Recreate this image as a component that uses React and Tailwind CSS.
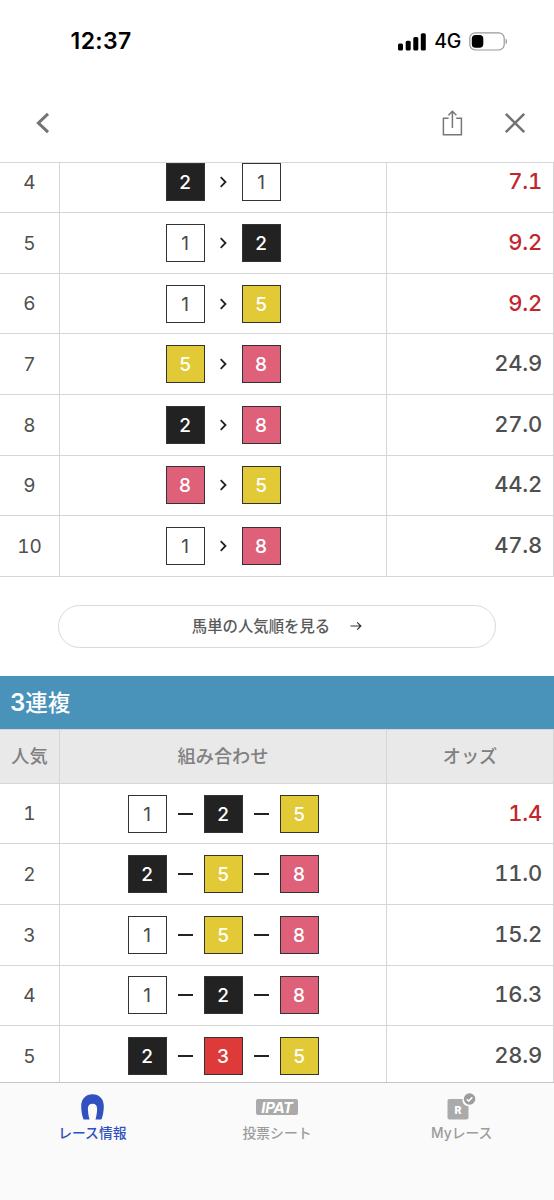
import React from 'react';

const exactaRows = [
  { rank: 4, horses: [2, 1], odds: '7.1' },
  { rank: 5, horses: [1, 2], odds: '9.2' },
  { rank: 6, horses: [1, 5], odds: '9.2' },
  { rank: 7, horses: [5, 8], odds: '24.9' },
  { rank: 8, horses: [2, 8], odds: '27.0' },
  { rank: 9, horses: [8, 5], odds: '44.2' },
  { rank: 10, horses: [1, 8], odds: '47.8' },
];

const trioRows = [
  { rank: 1, horses: [1, 2, 5], odds: '1.4' },
  { rank: 2, horses: [2, 5, 8], odds: '11.0' },
  { rank: 3, horses: [1, 5, 8], odds: '15.2' },
  { rank: 4, horses: [1, 2, 8], odds: '16.3' },
  { rank: 5, horses: [2, 3, 5], odds: '28.9' },
];

// bracket colours
const horseColors = {
  1: 'bg-white text-[#4a4a4a]',
  2: 'bg-[#222222] text-white font-medium',
  3: 'bg-[#df3a3a] text-white font-medium',
  5: 'bg-[#e2c936] text-white font-medium',
  8: 'bg-[#de6079] text-white font-medium',
};

const Horse = ({ number }) => (
  <span className={`flex h-[38px] w-[39px] items-center justify-center border border-[#333] pt-px text-[19px] leading-none ${horseColors[number]}`}>
    {number}
  </span>
);

const Separator = ({ ordered }) => (
  <span className="flex w-[37px] justify-center">
    {ordered ? (
      <svg width="8" height="12" viewBox="0 0 8 12" fill="none" stroke="#222" strokeWidth="1.8">
        <path d="M1.700 1.200 6.500 6l-4.800 4.800" />
      </svg>
    ) : (
      <span className="h-[2px] w-[15px] bg-[#222]"></span>
    )}
  </span>
);

const OddsRow = ({ row, ordered }) => (
  <div className="flex h-[60.6px] shrink-0 border-b border-[#d6d6d6] text-[#4f4f4f]">
    <div className="flex w-[60px] items-center justify-center border-r border-[#d6d6d6] pt-[2px] text-[19px] tabular-nums [font-kerning:none]">
      {row.rank}
    </div>
    <div className="flex w-[327px] items-center justify-center border-r border-[#d6d6d6]">
      {row.horses.map((number, i) => (
        <React.Fragment key={number}>
          {i > 0 && <Separator ordered={ordered} />}
          <Horse number={number} />
        </React.Fragment>
      ))}
    </div>
    <div className={`flex flex-1 items-center justify-end border-r border-[#d6d6d6] pr-[11px] pb-px text-[22px] font-medium tracking-[-0.2px] tabular-nums [font-kerning:none] ${parseFloat(row.odds) < 10 ? 'text-[#c1272d]' : ''}`}>
      {row.odds}
    </div>
  </div>
);

const StatusBar = () => (
  <div className="flex h-[83px] items-center justify-between pr-[46px] pl-[70.5px] text-black">
    <span className="text-[23px] font-semibold tracking-[0.4px]">12:37</span>
    <div className="flex items-center">
      <svg width="28" height="18" viewBox="0 0 28 18" fill="#000">
        <rect x="0" y="10.5" width="5" height="7" rx="1.5" />
        <rect x="7.7" y="7.8" width="5" height="9.7" rx="1.5" />
        <rect x="15.3" y="4" width="5" height="13.5" rx="1.5" />
        <rect x="22.8" y="0.3" width="5" height="17.2" rx="1.5" />
      </svg>
      <span className="ml-[8px] text-[19.5px] leading-none font-medium tracking-[-0.3px]">4G</span>
      <svg className="ml-[8px]" width="39" height="19" viewBox="0 0 39 19">
        <rect x="0.8" y="0.8" width="34.4" height="17.2" rx="5.5" fill="none" stroke="#999" strokeWidth="1.2" />
        <rect x="2.8" y="3" width="11.5" height="12.8" rx="3.8" fill="#000" />
        <path d="M36.6 6.6c1.9.9 1.9 4.9 0 5.8z" fill="#999" />
      </svg>
    </div>
  </div>
);

const Toolbar = () => (
  <div className="flex h-[79px] items-center justify-between pr-[28.5px] pl-[36px]">
    <svg width="14" height="22" viewBox="0 0 14 22" fill="none" stroke="#737373" strokeWidth="3">
      <path d="M12 1.8 2.4 11 12 20.2" />
    </svg>
    <div className="flex items-center gap-[40.5px]">
      <svg width="21" height="26" viewBox="0 0 21 26" fill="none" stroke="#777" strokeWidth="1.5">
        <path d="M6.6 8.2H1.4v16.6h18V8.2h-5.2" />
        <path d="M10.4 18V1.4M6.4 5.2l4-4 4 4" />
      </svg>
      <svg width="22" height="22" viewBox="0 0 22 22" fill="none" stroke="#737373" strokeWidth="2.6">
        <path d="m1.800 1.800 18.400 18.400M20.200 1.800 1.800 20.200" />
      </svg>
    </div>
  </div>
);

const Tab = ({ label, active, children }) => (
  <div className={`flex flex-1 flex-col items-center text-[13.8px] leading-[20px] font-medium ${active ? 'text-[#3151c0]' : 'text-[#9c9c9c]'}`}>
    <div className="flex h-[29px] items-end">{children}</div>
    <span className="mt-px">{label}</span>
  </div>
);

const App = () => {
  return (
    <div className="flex h-[1200px] w-[554px] flex-col overflow-hidden bg-white font-['Inter','Noto_Sans_CJK_JP',sans-serif]">
      <header className="h-[162px] shrink-0">
        <StatusBar />
        <Toolbar />
      </header>

      <main className="flex h-[920px] shrink-0 flex-col overflow-hidden border-t border-[#d6d6d6]">
        {/* the first visible row is partly scrolled under the header */}
        <div className="-mt-[10.4px] shrink-0">
          {exactaRows.map((row) => (
            <OddsRow key={row.rank} row={row} ordered />
          ))}
        </div>

        <button className="mt-[28px] ml-[58px] flex h-[43px] w-[438px] shrink-0 items-center justify-center rounded-full border border-[#dadada] text-[15.4px] font-medium text-[#5a5a5a]">
          馬単の人気順を見る
          <svg className="ml-[20px]" width="12" height="10" viewBox="0 0 12 10" fill="none" stroke="#333" strokeWidth="1.2">
            <path d="M.5 5h10.3M7.2 1.3 10.9 5 7.2 8.7" />
          </svg>
        </button>

        <h2 className="mt-[28px] flex h-[53px] shrink-0 items-center bg-[#4993bb] pt-px pl-[10px] text-[22.5px] leading-none font-medium text-white">
          <span className="text-[24px] font-semibold">3</span>連複
        </h2>
        <div className="flex h-[55px] shrink-0 border-y border-[#d6d6d6] bg-[#e9e9e9] text-[18.2px] font-medium text-[#808080]">
          <div className="flex w-[60px] items-center justify-center border-r border-[#d6d6d6]">人気</div>
          <div className="flex w-[327px] items-center justify-center border-r border-[#d6d6d6]">組み合わせ</div>
          <div className="flex flex-1 items-center justify-center border-r border-[#d6d6d6]">オッズ</div>
        </div>
        {trioRows.map((row) => (
          <OddsRow key={row.rank} row={row} />
        ))}
      </main>

      <nav className="flex h-[118px] shrink-0 border-t border-[#c4c4c4] bg-[#fafafa] pt-[10px]">
        <Tab label="レース情報" active>
          <svg className="mb-[2px]" width="23" height="26" viewBox="0 0 23 26" fill="currentColor">
            <path d="M2.600 25.600C1 21.500.2 16.500.2 12 .2 4.800 5 .3 11.500.3S22.800 4.800 22.800 12c0 4.500-.8 9.500-2.400 13.600h-5.900c1-3.500 1.600-7.600 1.600-10.800 0-3.400-1.700-5-4.600-5s-4.600 1.600-4.600 5c0 3.200.6 7.300 1.600 10.800z" />
          </svg>
        </Tab>
        <Tab label="投票シート">
          <span className="mb-[7px] flex h-[16px] w-[42px] items-center justify-center rounded-[2px] bg-[#aaa] text-[15px] leading-none font-bold tracking-[-0.3px] text-white italic">
            IPAT
          </span>
        </Tab>
        <Tab label="Myレース">
          <svg className="mb-[2px] ml-[-1px]" width="29" height="27" viewBox="0 0 29 27">
            <path d="M2.500 6H15.500c-.5 4 2 7 6 7.300V24.500a2 2 0 0 1-2 2h-17a2 2 0 0 1-2-2V8a2 2 0 0 1 2-2z" fill="#aaa" />
            <circle cx="22.600" cy="6" r="5.700" fill="#9c9c9c" />
            <path d="m19.800 6.200 2 1.900 3.500-3.800" fill="none" stroke="#fff" strokeWidth="1.500" />
            <text x="11" y="20.500" textAnchor="middle" fontSize="10.500" fontWeight="800" fill="#fff">R</text>
          </svg>
        </Tab>
      </nav>
    </div>
  );
};

export default App;
